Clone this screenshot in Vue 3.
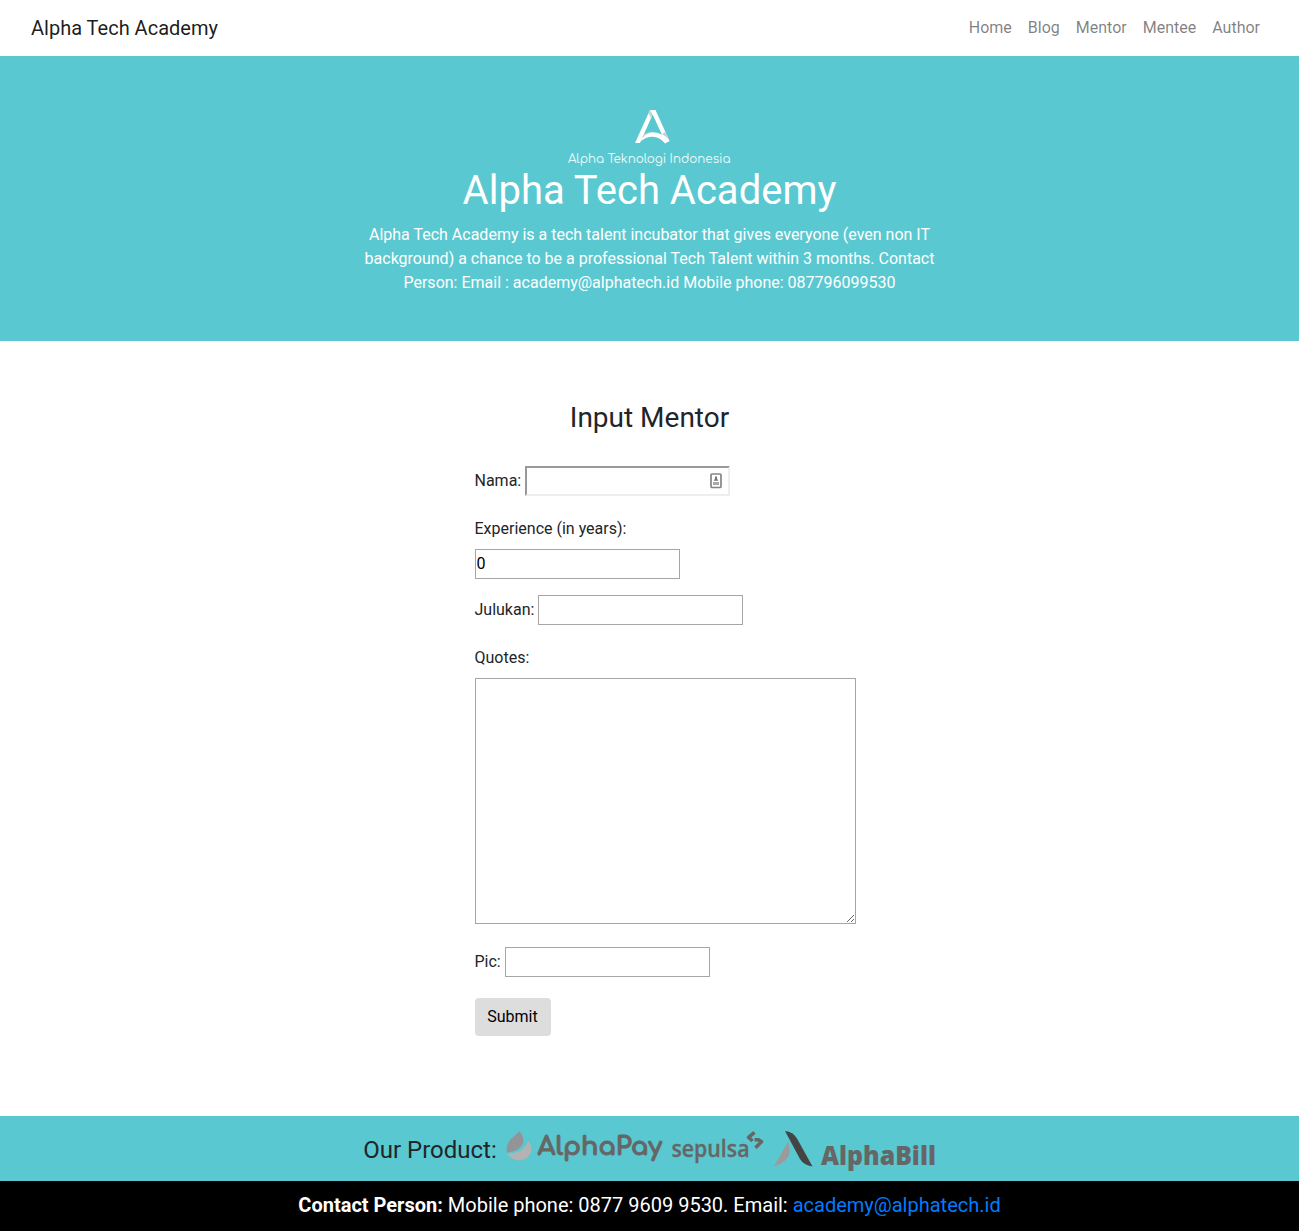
<script setup>
import { ref } from 'vue'

const links = ['Home', 'Blog', 'Mentor', 'Mentee', 'Author']
const nama = ref('')
const experience = ref(0)
const julukan = ref('')
const quotes = ref('')
const pic = ref('')
</script>

<template>
  <div class="page">
    <nav class="navbar">
      <a class="brand">Alpha Tech Academy</a>
      <div class="links">
        <a v-for="link in links" :key="link">{{ link }}</a>
      </div>
    </nav>

    <header class="hero">
      <svg class="hero-logo" width="164" height="60" viewBox="567 108 164 60">
        <path d="M650 110h5.500L669.500 141l-4 1.500L652.700 114.500 640 143h-5z" fill="#fff" />
        <path d="M641 141q0-8.500 11-8.800 10-.2 17.500 8.800l-4.500 2.500q-5-6.500-12.500-6.800-6-.2-11.500 4.300z" fill="#fff" />
        <path d="M650 110l2.700 4.500-1.700 4-2.300-5.500z" fill="#c3d3d4" />
        <path d="M665.300 132l4.200 8.500q-3-4-7.500-6.500zM641.200 139.500l2.500-5q3-2 7-2-6 2-9.500 7z" fill="#c3d0d1" />
        <text x="568" y="163" textLength="162.500" lengthAdjust="spacingAndGlyphs">Alpha Teknologi Indonesia</text>
      </svg>
      <h1>Alpha Tech Academy</h1>
      <p>Alpha Tech Academy is a tech talent incubator that gives everyone (even non IT background) a chance to be a professional Tech Talent within 3 months. Contact Person: Email : academy@alphatech.id Mobile phone: 087796099530</p>
    </header>

    <main>
      <h3>Input Mentor</h3>
      <form @submit.prevent>
        <div class="row nama">
          <label for="nama">Nama:</label>
          <div class="field">
            <input id="nama" v-model="nama" class="inset" type="text">
            <svg class="autofill" width="12" height="16" viewBox="0 0 12 16">
              <rect x="1" y="1" width="10" height="13.500" rx="1" fill="#fff" stroke="#858585" stroke-width="1.700" />
              <path d="M5 3.500h2v2l1.300 2.300H3.700L5 5.500z" fill="#777" />
              <path d="M3 9h6v3H3z" fill="#aaa" />
            </svg>
          </div>
        </div>
        <label class="block" for="exp">Experience (in years):</label>
        <input id="exp" v-model="experience" class="years" type="text">
        <div class="row julukan">
          <label for="julukan">Julukan:</label>
          <input id="julukan" v-model="julukan" type="text">
        </div>
        <label class="block" for="quotes">Quotes:</label>
        <textarea id="quotes" v-model="quotes"></textarea>
        <div class="row pic">
          <label for="pic">Pic:</label>
          <input id="pic" v-model="pic" type="text">
        </div>
        <button type="submit">Submit</button>
      </form>
    </main>

    <footer>
      <div class="products">
        <span>Our Product:</span>
        <svg class="logo-pay" width="159" height="50" viewBox="505 1125 159 50">
          <path d="M519.500 1131.300q5 6 3.500 11.500-1.500 4.500-6 7-4.500 2.500-10 2.800-1.500-8 4-13.500 5-4.500 8.500-7.800z" fill="#929497" />
          <path d="M528.500 1141q4 6 2.500 11-2.500 7-10 8.300-9 1-13.500-6.800 9 0 14-3.500 3-2.500 7-9z" fill="#b3b3b3" />
          <text class="pay" x="537.500" y="1155" textLength="124.500" lengthAdjust="spacingAndGlyphs">AlphaPay</text>
        </svg>
        <svg width="94" height="50" viewBox="671 1125 94 50">
          <text class="sepulsa" x="671.500" y="1156.500" textLength="78" lengthAdjust="spacingAndGlyphs">sepulsa</text>
          <path d="M754.500 1132.300L748.500 1137.300L752.500 1141M754.500 1139.700H758.500L761.500 1141.800L755.500 1147.800" fill="none" stroke="#666" stroke-width="3.500" stroke-linejoin="round" />
        </svg>
        <svg width="164" height="50" viewBox="773 1125 164 50">
          <path d="M788 1141.500q3 9 .5 14.500-2.500 5-7.500 7.500-3 1.500-7 3z" fill="#9b9b9b" />
          <path d="M785 1131q8 .5 12 7.500l15.500 28q-9-1.500-12.500-7.500z" fill="#444" />
          <text class="bill" x="821" y="1165" textLength="115" lengthAdjust="spacingAndGlyphs">AlphaBill</text>
        </svg>
      </div>
      <div class="contact"><strong>Contact Person:</strong> Mobile phone: 0877 9609 9530. Email: <a>academy@alphatech.id</a></div>
    </footer>
  </div>
</template>

<style>
body {
  margin: 0;
}
</style>

<style scoped>
.page {
  height: 1231px;
  display: flex;
  flex-direction: column;
  font: 16px/24px Roboto, sans-serif;
  color: #212529;
  background: #fff;
}
.page * {
  box-sizing: border-box;
}
.navbar {
  height: 56px;
  padding: 0 39px 0 31px;
  display: flex;
  align-items: center;
  justify-content: space-between;
}
.brand {
  font-size: 20px;
  color: rgba(0, 0, 0, 0.9);
}
.links {
  display: flex;
  gap: 16px;
  color: rgba(0, 0, 0, 0.5);
}
.hero {
  height: 285px;
  padding-top: 52px;
  display: flex;
  flex-direction: column;
  align-items: center;
  color: #fff;
  background: #5ac8d0;
  text-align: center;
}
.hero-logo {
  font: 400 13px Comfortaa, Lato, sans-serif;
  fill: #edfafb;
  margin: 0 1px -1px 0;
  flex: none;
  overflow: visible;
}
h1 {
  margin: 0 0 8px;
  font-size: 40px;
  line-height: 48px;
  font-weight: 400;
}
.hero p {
  margin: 0;
  width: 585px;
}
main {
  flex: 1;
  padding-top: 60px;
  display: flex;
  flex-direction: column;
  align-items: center;
}
h3 {
  margin: 0 0 31px;
  font-size: 28px;
  line-height: 34px;
  font-weight: 400;
}
form {
  width: 350px;
  display: flex;
  flex-direction: column;
  align-items: flex-start;
}
.row {
  display: flex;
  gap: 4px;
}
.row label {
  line-height: 30px;
}
.field {
  position: relative;
}
.autofill {
  position: absolute;
  right: 8px;
  top: 7px;
}
input {
  display: block;
  width: 205px;
  height: 30px;
  margin: 0;
  padding: 1px;
  border: 1px solid #a6a6a6;
  border-radius: 0;
  background: #fff;
  color: #000;
  font: inherit;
  outline: none;
}
.years {
  padding-bottom: 3px;
}
.inset {
  border: 2px solid;
  border-color: #999 #eee #eee #999;
}
.block {
  margin: 21px 0 8px;
}
.julukan {
  margin-top: 16px;
}
textarea {
  width: 381px;
  height: 246px;
  margin: 0;
  border: 1px solid #a6a6a6;
  border-radius: 0;
  outline: none;
  resize: both;
}
.pic {
  margin: 23px 0 21px;
}
button {
  height: 38px;
  width: 76px;
  padding: 0;
  border: 0;
  border-radius: 4px;
  background: #ddd;
  color: #000;
  font: inherit;
}
.products {
  height: 65px;
  display: flex;
  justify-content: center;
  align-items: flex-start;
  padding: 9px 0 0 1px;
  gap: 8px;
  background: #5ac8d0;
}
.products span {
  font-size: 24px;
  line-height: 50px;
}
.products svg {
  overflow: visible;
}
.logo-pay {
  margin-right: -1px;
}
.products text {
  fill: #666;
}
.pay {
  font: 700 26px Comfortaa, "Open Sans", sans-serif;
  stroke: #666;
  stroke-width: 1px;
}
.sepulsa {
  font: 600 22.5px "Open Sans", sans-serif;
  stroke: #666;
  stroke-width: 0.3px;
}
.bill {
  font: 800 26px "Open Sans", sans-serif;
}
.contact {
  height: 50px;
  text-align: center;
  font-size: 20px;
  line-height: 48px;
  color: #fff;
  background: #000;
}
.contact a {
  color: #007bff;
}
</style>
